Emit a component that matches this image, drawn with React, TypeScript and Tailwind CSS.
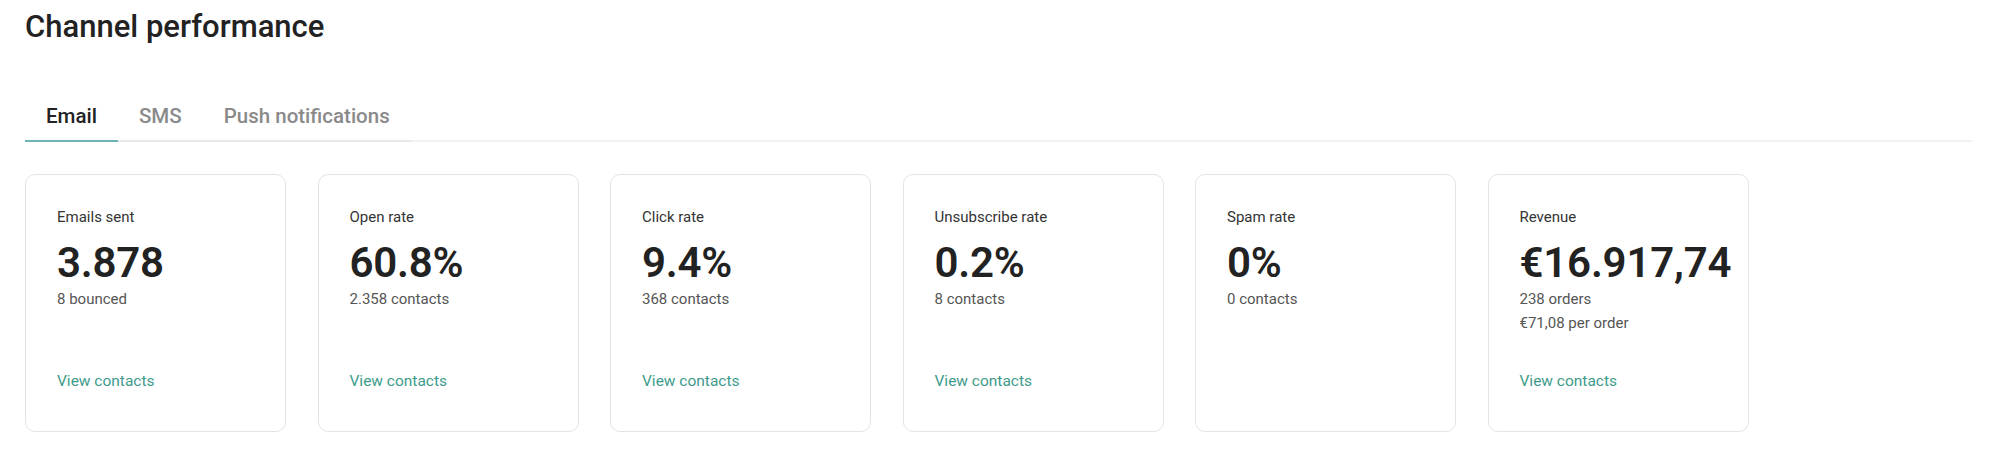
import { useState } from 'react';

type Tab = 'email' | 'sms' | 'push';

const tabs: { key: Tab; label: string }[] = [
  { key: 'email', label: 'Email' },
  { key: 'sms', label: 'SMS' },
  { key: 'push', label: 'Push notifications' },
];

type Stat = {
  label: string;
  value: string;
  details: string[];
  link?: boolean;
};

const stats: Stat[] = [
  { label: 'Emails sent', value: '3.878', details: ['8 bounced'], link: true },
  { label: 'Open rate', value: '60.8%', details: ['2.358 contacts'], link: true },
  { label: 'Click rate', value: '9.4%', details: ['368 contacts'], link: true },
  { label: 'Unsubscribe rate', value: '0.2%', details: ['8 contacts'], link: true },
  { label: 'Spam rate', value: '0%', details: ['0 contacts'] },
  { label: 'Revenue', value: '€16.917,74', details: ['238 orders', '€71,08 per order'], link: true },
];

function StatCard({ stat }: { stat: Stat }) {
  return (
    <div className="flex h-[258px] w-[261px] shrink-0 flex-col rounded-[10px] border border-[#e4e4e4] bg-white pl-[31px] pr-4 pt-8 pb-[38px]">
      <div className="text-[15px] leading-5 text-[#333]">{stat.label}</div>
      <div className="mt-3 text-[42px] font-semibold leading-[48px] tracking-[-0.2px] text-[#222]">{stat.value}</div>
      {stat.details.map((d) => (
        <div key={d} className="text-[15px] leading-6 text-[#555]">{d}</div>
      ))}
      {stat.link && (
        <a href="#" className="mt-auto text-[15.5px] leading-6 text-[#3d9b8b]">
          View contacts
        </a>
      )}
    </div>
  );
}

export default function App() {
  const [active, setActive] = useState<Tab>('email');

  return (
    <div className="min-h-[471px] bg-white pl-[25px] pr-[27px] pt-[9px] font-['Roboto','Liberation_Sans',sans-serif]">
      <h1 className="text-[31px] font-medium leading-9 text-[#222]">Channel performance</h1>

      {/* Tabs */}
      <div className="mt-[45px] border-b-2 border-[#f1f1f1]">
        <nav className="-mb-[2px] flex w-fit border-b-2 border-[#e9e9e9]">
          {tabs.map((tab) => (
            <button
              key={tab.key}
              onClick={() => setActive(tab.key)}
              className={`-mb-[2px] border-b-2 px-[21px] pt-3 pb-[10px] text-[20.5px] font-medium leading-7 ${
                active === tab.key ? 'border-[#6db3b6] text-[#222]' : 'border-transparent text-[#8a8a8a]'
              }`}
            >
              {tab.label}
            </button>
          ))}
        </nav>
      </div>

      {/* Cards */}
      <div className="mt-8 flex gap-[31.5px]">
        {stats.map((s) => (
          <StatCard key={s.label} stat={s} />
        ))}
      </div>
    </div>
  );
}
